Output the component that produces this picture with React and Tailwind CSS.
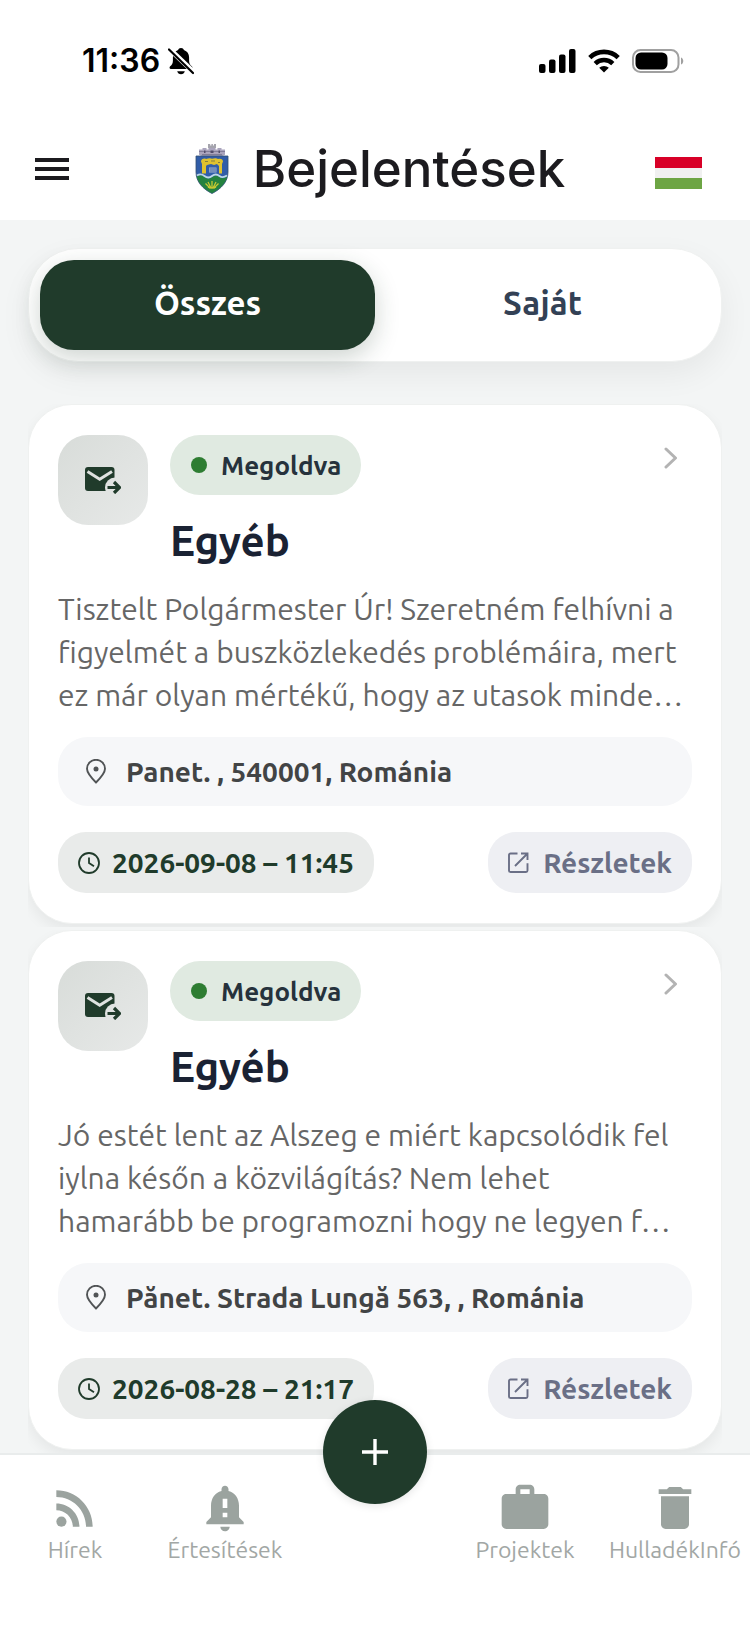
import { MdDelete, MdNotificationImportant, MdRssFeed, MdWork } from "react-icons/md";

const reports = [
  {
    id: 1,
    status: "Megoldva",
    title: "Egyéb",
    text: "Tisztelt Polgármester Úr! Szeretném felhívni a\nfigyelmét a buszközlekedés problémáira, mert\nez már olyan mértékű, hogy az utasok minde…",
    place: "Panet. , 540001, Románia",
    date: "2026-09-08 – 11:45",
  },
  {
    id: 2,
    status: "Megoldva",
    title: "Egyéb",
    text: "Jó estét lent az Alszeg e miért kapcsolódik fel\niylna későn a közvilágítás? Nem lehet\nhamarább be programozni hogy ne legyen f…",
    place: "Pănet. Strada Lungă 563, , Románia",
    date: "2026-08-28 – 21:17",
  },
];

function MutedBell() {
  return (
    <svg viewBox="0 0 26 28" className="h-7 w-[26px]" aria-hidden="true">
      <path d="M13 1c-1.500 0-2.600.9-2.900 2.100C6.700 4.300 4.900 7 4.900 10.500v3.200c0 2.700-1 4-2.700 5.600-1 1-.9 2.700.8 2.700h20c1.700 0 1.800-1.700.8-2.700-1.700-1.600-2.700-2.900-2.700-5.600v-3.200c0-3.500-1.800-6.200-5.200-7.400C15.600 1.900 14.500 1 13 1z" />
      <path d="M9.200 24.200h7.600c-.5 1.900-1.900 3-3.800 3s-3.300-1.100-3.800-3z" />
      <path d="M1 1.500 26 25.500" stroke="#fff" strokeWidth="5" />
      <path d="M1 2.500 25 26" stroke="#000" strokeWidth="2.200" strokeLinecap="round" />
    </svg>
  );
}

function Signal() {
  return (
    <svg viewBox="0 0 37 24" className="h-6 w-[37px]" aria-hidden="true">
      <rect x="0" y="15" width="6.500" height="9" rx="2" />
      <rect x="10" y="10.500" width="6.500" height="13.500" rx="2" />
      <rect x="20" y="5.500" width="6.500" height="18.500" rx="2" />
      <rect x="30" y="0" width="6.500" height="24" rx="2" />
    </svg>
  );
}

function Wifi() {
  return (
    <svg viewBox="0 0 32 24" className="h-6 w-8" aria-hidden="true">
      <g fill="none" stroke="#000" strokeWidth="4.600">
        <path d="M1.800 8.600a20.500 20.500 0 0 1 28.400 0" />
        <path d="M7.200 14.600a12.700 12.700 0 0 1 17.600 0" />
      </g>
      <path d="M16 23.500 11.200 18.800a7 7 0 0 1 9.600 0z" />
    </svg>
  );
}

function Battery() {
  return (
    <svg viewBox="0 0 52 24" className="h-6 w-[52px]" aria-hidden="true">
      <rect x="1" y="1" width="45.500" height="22" rx="7.500" fill="none" stroke="#a0a0a0" strokeWidth="2" />
      <rect x="3.500" y="3.500" width="32" height="17" rx="5.500" />
      <path d="M49 8.500c3 1 3 6 0 7z" fill="#a0a0a0" />
    </svg>
  );
}

function Crest() {
  return (
    <svg viewBox="0 0 34 50" className="h-[50px] w-[34px]" aria-hidden="true">
      <path d="M13 0h2.200v1.400h1.200V0h1.500v1.400H19V0h2v4h-8z" fill="#a5a4ad" />
      <path d="M4 5.500h3.500V4h4v1.500h2V4h7v1.500h2V4h4v1.500H30v5.200l-3.500 1.500H7.500L4 10.700z" fill="#aaa4bd" />
      <path d="M4 7.500h26M7 10.500h20" stroke="#77738e" strokeWidth=".8" />
      <path d="M15.500 6.500h3V9h-3zM9 6.500h1.500V9H9zM23.500 6.500H25V9h-1.500z" fill="#514c6b" />
      <path d="M1 12h32v16c0 10-7 17-16 21.500C8 45 1 38 1 28z" fill="#315da8" stroke="#334f70" strokeWidth=".8" />
      <path d="M1.800 32.500c3-2 5.200-1.500 7.700.5s5 2 7.500 0 5-2 7.500 0 4.700 1.500 7.700-.5C30.500 40 24.500 45.300 17 49.200 9.500 45.300 3.500 40 1.800 32.500z" fill="#24823f" />
      <path d="M2 31.500c3-2 5-1.500 7.500.5s5 2 7.500 0 5-2 7.500 0 4.500 1.500 7.500-.5" fill="none" stroke="#bdd7e6" strokeWidth="1.800" />
      <path d="M6 17.500c0-2.500 3-3.500 5-2.500 2-1 5-1 6-.3 2-.7 5-.7 6 .3 3-1 5 .5 5 2.500l-1 2.500v9.500h-3V22l-2-2-3 1-3-1-4 1-1 1v7.500H7V20z" fill="#e0c22e" />
      <path d="M10 17.500h3m3-.5h4m3 1.500h2" stroke="#857f3f" strokeWidth="1" />
      <path d="M14 23.500h7.500v5H14z" fill="#9fb1cf" />
      <path d="M14.500 25h6.500M14.500 27h6.500" stroke="#365ba0" strokeWidth=".8" />
      <path d="M17 44v-7m-1 7-3-6m5 6 3-6m-6 6-4.500-4.500M19 44l4.500-4.500" stroke="#c6c832" strokeWidth="1.300" fill="none" />
      <path d="M13 43c2 1.500 6 1.500 8 0" stroke="#c6c832" strokeWidth="1.300" fill="none" />
    </svg>
  );
}

function ForwardMail({ id }) {
  const maskId = `mail-mask-${id}`;
  return (
    <svg viewBox="0 0 36 28" className="h-7 w-9" aria-hidden="true">
      <mask id={maskId}>
        <rect width="36" height="28" fill="#fff" />
        <path d="m2.500 5.500 12.200 7.800L27 5.500" fill="none" stroke="#000" strokeWidth="3" />
        <circle cx="30" cy="21.500" r="10" fill="#000" />
      </mask>
      <rect y="1" width="29.500" height="24" rx="3" fill="#203b2b" mask={`url(#${maskId})`} />
      <path d="M22.500 21.500H34M29 16l5.500 5.500L29 27" fill="none" stroke="#203b2b" strokeWidth="3.200" />
    </svg>
  );
}

function Pin() {
  return (
    <svg viewBox="0 0 20 25" className="h-[25px] w-5 shrink-0" fill="none" stroke="#515456" strokeWidth="1.900" aria-hidden="true">
      <path d="M10 23.500C5 18.500 1 14 1 9.800a9 9 0 0 1 18 0c0 4.200-4 8.700-9 13.700z" />
      <circle cx="10" cy="10" r="2.500" fill="#515456" stroke="none" />
    </svg>
  );
}

function Clock() {
  return (
    <svg viewBox="0 0 22 22" className="size-[22px] shrink-0" fill="none" stroke="#203b2b" strokeWidth="1.800" aria-hidden="true">
      <circle cx="11" cy="11" r="10" />
      <path d="M11 5.500V11l5 3.300" />
    </svg>
  );
}

function OpenExternal() {
  return (
    <svg viewBox="0 0 21 21" className="size-[21px] shrink-0" fill="none" stroke="#6a6f86" strokeWidth="1.900" aria-hidden="true">
      <path d="M9.500 1.500h-7A1.500 1.500 0 0 0 1 3v15.500A1.500 1.500 0 0 0 2.500 20H18a1.500 1.500 0 0 0 1.500-1.500v-7.300" />
      <path d="M13 1.500h6.500V8M19.500 1.500 7 14" />
    </svg>
  );
}

function ReportCard({ report }) {
  return (
    <article className="rounded-[44px] border border-[#eff1f0] bg-white px-[29px] py-[30px] shadow-[0_6px_14px_rgba(0,0,0,0.06)]">
      <div className="flex items-start">
        <div className="flex size-[90px] shrink-0 items-center justify-center rounded-[30px] bg-gradient-to-br from-[#d8dcd9] to-[#e7e9e8]">
          <ForwardMail id={report.id} />
        </div>
        <div className="ml-[22px] flex-1">
          <span className="inline-flex h-[60px] items-center gap-[14px] rounded-full bg-[#e0eae1] pr-5 pl-[21px] text-[26px] font-semibold text-[#26323c]">
            <span className="size-4 rounded-full bg-[#2e7d32]" />
            {report.status}
          </span>
          <h2 className="mt-5 text-[42px] leading-[52px] font-bold text-[#1a2233]">{report.title}</h2>
        </div>
        <button type="button" aria-label="Megnyitás" className="mr-[14px] p-0 pt-[11px]">
          <svg viewBox="0 0 14 24" className="h-6 w-[14px]" fill="none" stroke="#b3b3b3" strokeWidth="3" strokeLinecap="round" strokeLinejoin="round" aria-hidden="true">
            <path d="m2 3 9.500 9L2 21" />
          </svg>
        </button>
      </div>
      <p className="mt-[21px] text-[30px] leading-[43px] whitespace-pre-line text-[#666666]">{report.text}</p>
      <div className="mt-5 flex min-h-[69px] items-center gap-5 rounded-[30px] bg-[#f6f7f9] px-7 text-[28px] leading-9 font-semibold text-[#424445]">
        <Pin />
        {report.place}
      </div>
      <div className="mt-[26px] flex items-center justify-between">
        <div className="flex h-[61px] items-center gap-3 rounded-[28px] bg-[#e9ebea] px-5 text-[28px] font-bold text-[#203b2b]">
          <Clock />
          {report.date}
        </div>
        <button type="button" className="flex h-[61px] items-center gap-[14px] rounded-[28px] bg-[#eeeff3] px-5 text-[28px] font-bold text-[#6a6f86]">
          <OpenExternal />
          Részletek
        </button>
      </div>
    </article>
  );
}

function NavItem({ icon, label }) {
  return (
    <a href="#" className="flex flex-col items-center pt-[27px] text-[23px] leading-8 whitespace-nowrap text-[#a2a7a5]">
      <span className="flex h-[52px] items-center text-[#9ba39f]">{icon}</span>
      {label}
    </a>
  );
}

export default function App() {
  return (
    <div className="flex min-h-screen flex-col bg-[#f3f5f5] font-['Ubuntu','Noto_Sans',sans-serif]">
      <header className="bg-white font-['Inter',sans-serif]">
        <div className="flex h-[122px] items-center justify-between pr-[66px] pl-[82px]">
          <div className="flex items-center gap-2">
            <span className="text-[32px] font-semibold text-black">11:36</span>
            <MutedBell />
          </div>
          <div className="flex items-center gap-3">
            <Signal />
            <Wifi />
            <Battery />
          </div>
        </div>
        <div className="flex h-[98px] items-center justify-between pr-12 pb-1 pl-[35px]">
          <button type="button" aria-label="Menü" className="flex w-[70px] flex-col gap-[5px]">
            <span className="h-1 w-[34px] bg-[#1c1b1f]" />
            <span className="h-1 w-[34px] bg-[#1c1b1f]" />
            <span className="h-1 w-[34px] bg-[#1c1b1f]" />
          </button>
          <div className="flex items-center gap-6">
            <Crest />
            <h1 className="text-[51px] leading-[60px] font-medium text-[#1c1b1f]">Bejelentések</h1>
          </div>
          <button type="button" aria-label="Magyar" className="mt-2 flex w-[47px] flex-col">
            <span className="h-[11px] w-full bg-[#d80027]" />
            <span className="h-[10px] w-full bg-[#f0f0f0]" />
            <span className="h-[11px] w-full bg-[#6da544]" />
          </button>
        </div>
      </header>

      <main className="flex-1 px-7 pt-7">
        <div className="grid grid-cols-2 rounded-[50px] border border-[#eff1f0] bg-white p-[11px] shadow-[0_12px_32px_rgba(0,0,0,0.06)]">
          <button type="button" className="h-[90px] rounded-[34px] bg-[#203b2b] pb-1 text-[33px] font-bold text-white shadow-[0_8px_24px_rgba(32,59,43,0.22)]">
            Összes
          </button>
          <button type="button" className="h-[90px] rounded-[34px] pb-1 text-[33px] font-semibold text-[#334155]">
            Saját
          </button>
        </div>
        <ul className="mt-[42px] flex flex-col gap-[3px]">
          {reports.map((report) => (
            <li key={report.id} className="overflow-hidden pb-[3px]">
              <ReportCard report={report} />
            </li>
          ))}
        </ul>
      </main>

      <nav className="grid h-[180px] grid-cols-5 border-t-2 border-[#e9ecec] bg-white">
        <NavItem icon={<MdRssFeed className="size-14" />} label="Hírek" />
        <NavItem icon={<MdNotificationImportant className="size-14" />} label="Értesítések" />
        <div className="flex justify-center">
          <button type="button" aria-label="Új bejelentés" className="-mt-[55px] flex size-[104px] items-center justify-center rounded-full bg-[#203b2b] shadow-[0_2px_8px_rgba(0,0,0,0.1)]">
            <svg viewBox="0 0 26 26" className="size-[26px]" stroke="#fff" strokeWidth="3.400" aria-hidden="true">
              <path d="M13 0v26M0 13h26" />
            </svg>
          </button>
        </div>
        <NavItem icon={<MdWork className="size-14" />} label="Projektek" />
        <NavItem icon={<MdDelete className="size-14" />} label="HulladékInfó" />
      </nav>
    </div>
  );
}
